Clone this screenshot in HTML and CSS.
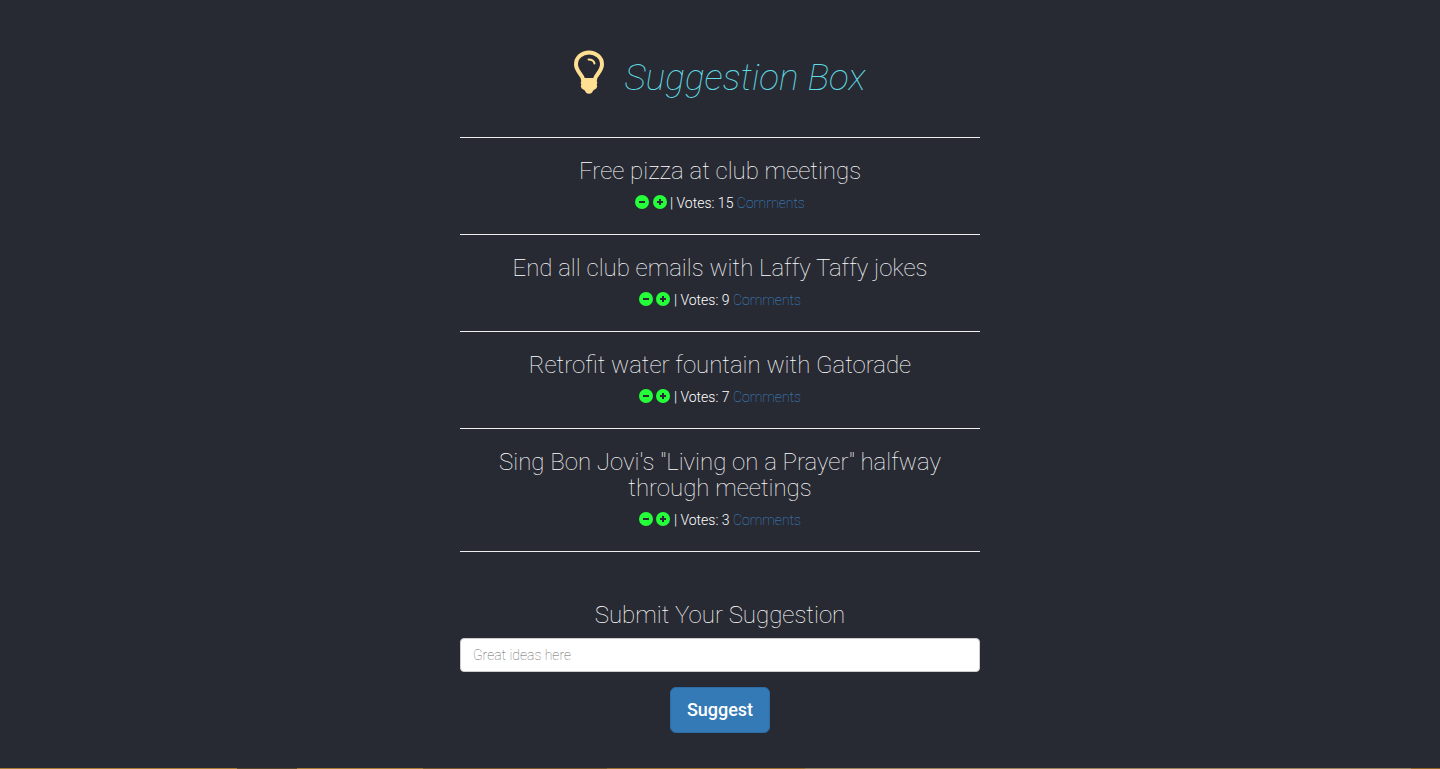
FILE: index.html
```html
<!DOCTYPE html>
<html lang="en">
<head>
<meta charset="utf-8">
<meta name="viewport" content="width=device-width, initial-scale=1">
<title>Suggestion Box</title>
<link rel="stylesheet" href="styles.css">
</head>
<body>
<svg class="sprite" aria-hidden="true">
  <symbol id="minus" viewBox="0 0 14 14"><path fill-rule="evenodd" d="M7 0a7 7 0 1 1 0 14A7 7 0 0 1 7 0ZM4 6v2h6V6Z"/></symbol>
  <symbol id="plus" viewBox="0 0 14 14"><path fill-rule="evenodd" d="M7 0a7 7 0 1 1 0 14A7 7 0 0 1 7 0ZM6 4v2H4v2h2v2h2V8h2V6H8V4Z"/></symbol>
</svg>
<main class="page">
  <header class="header">
    <svg class="bulb" viewBox="0 0 30 44" aria-hidden="true">
      <path class="glass" d="M9.200 29.500C8.500 24.500 2 21.500 2 14.200C2 7.500 8 2.500 15 2.500s13 5 13 11.700c0 7.300-6.500 10.300-7.200 15.300"/>
      <path class="shine" d="M14.500 9.500c3.200 0 5.500 1.500 6 4"/>
      <path class="base" d="M7.500 28h15l.7 1.500-.5 1.800.7 1.500-.7 1.700.5 1.500-.7 2.200-3.300 2.300c-.7 2-2.200 3.300-4.200 3.300s-3.500-1.300-4.200-3.300l-3.300-2.300-.7-2.200.5-1.500-.7-1.700.7-1.500-.5-1.800Z"/>
    </svg>
    <h1 class="title">Suggestion Box</h1>
  </header>
  <section class="list">
    <article class="item">
      <h3 class="heading">Free pizza at club meetings</h3>
      <div class="meta">
        <button class="vote" aria-label="Vote down"><svg><use href="#minus"/></svg></button>
        <button class="vote" aria-label="Vote up"><svg><use href="#plus"/></svg></button>
        <span>| Votes: 15</span> <a class="comments" href="#">Comments</a>
      </div>
    </article>
    <article class="item">
      <h3 class="heading">End all club emails with Laffy Taffy jokes</h3>
      <div class="meta">
        <button class="vote" aria-label="Vote down"><svg><use href="#minus"/></svg></button>
        <button class="vote" aria-label="Vote up"><svg><use href="#plus"/></svg></button>
        <span>| Votes: 9</span> <a class="comments" href="#">Comments</a>
      </div>
    </article>
    <article class="item">
      <h3 class="heading">Retrofit water fountain with Gatorade</h3>
      <div class="meta">
        <button class="vote" aria-label="Vote down"><svg><use href="#minus"/></svg></button>
        <button class="vote" aria-label="Vote up"><svg><use href="#plus"/></svg></button>
        <span>| Votes: 7</span> <a class="comments" href="#">Comments</a>
      </div>
    </article>
    <article class="item">
      <h3 class="heading">Sing Bon Jovi's "Living on a Prayer" halfway through meetings</h3>
      <div class="meta">
        <button class="vote" aria-label="Vote down"><svg><use href="#minus"/></svg></button>
        <button class="vote" aria-label="Vote up"><svg><use href="#plus"/></svg></button>
        <span>| Votes: 3</span> <a class="comments" href="#">Comments</a>
      </div>
    </article>
  </section>
  <form class="form">
    <label class="heading" for="idea">Submit Your Suggestion</label>
    <input class="field" id="idea" type="text" placeholder="Great ideas here">
    <button class="submit" type="button">Suggest</button>
  </form>
</main>
<footer class="strip"></footer>
</body>
</html>
```

FILE: styles.css
```css
* { box-sizing: border-box; }

body {
  display: flex;
  flex-direction: column;
  min-height: 100vh;
  margin: 0;
  background: #282a33;
  color: #fff;
  font: 100 14px/20px Roboto, "Liberation Sans", sans-serif;
}

.sprite { display: none; }

.page {
  flex: 1;
  width: 100%;
  max-width: 520px;
  margin: 0 auto;
  padding: 50px 0 35px;
}

.header {
  display: flex;
  justify-content: center;
  gap: 20px;
  padding-bottom: 39px;
}

.bulb {
  width: 30px;
  height: 44px;
  fill: none;
  stroke: #ffdf91;
}

.glass { stroke-width: 4; }
.shine { stroke-width: 2; stroke-linecap: round; }
.base { fill: #ffdf91; stroke: none; }

.title {
  margin: 8px 0 0;
  color: #5fdde5;
  font-size: 37px;
  font-style: italic;
  font-weight: 100;
  line-height: 40px;
}

.list { border-bottom: 1px solid #eee; }

.item {
  padding: 20px;
  border-top: 1px solid #eee;
  text-align: center;
}

.heading {
  margin: 0 0 10px;
  font-size: 24px;
  font-weight: 100;
  line-height: 26px;
}

.item .heading { margin-bottom: 9px; }

.meta {
  padding-bottom: 1px;
  font-weight: 300;
}

.vote {
  width: 14px;
  height: 14px;
  padding: 0;
  border: 0;
  background: none;
  color: #24ff3a;
  vertical-align: -1px;
  cursor: pointer;
}

.vote svg {
  display: block;
  width: 14px;
  height: 14px;
  fill: currentColor;
}

.comments {
  color: #3d8fd6;
  font-weight: 100;
  text-decoration: none;
}

.form {
  display: flex;
  flex-direction: column;
  align-items: center;
  padding-top: 50px;
}

.field {
  width: 100%;
  height: 34px;
  margin-bottom: 15px;
  padding: 6px 12px;
  border: 1px solid #ccc;
  border-radius: 4px;
  background: #fff;
  color: #555;
  font: inherit;
}

.field::placeholder { color: #666; opacity: 1; }

.submit {
  padding: 10px 16px;
  border: 1px solid #2e6da4;
  border-radius: 6px;
  background: #337ab7;
  color: #fff;
  font: 500 18px/24px Roboto, "Liberation Sans", sans-serif;
  cursor: pointer;
}

.strip {
  height: 1px;
  background: linear-gradient(90deg, #a87b32 0 237px, #594829 237px 297px, #a87b32 297px 423px, #79592b 423px 607px, #99702f 607px 805px, #98835b 805px 98%, #8f6523 98%);
}
```
